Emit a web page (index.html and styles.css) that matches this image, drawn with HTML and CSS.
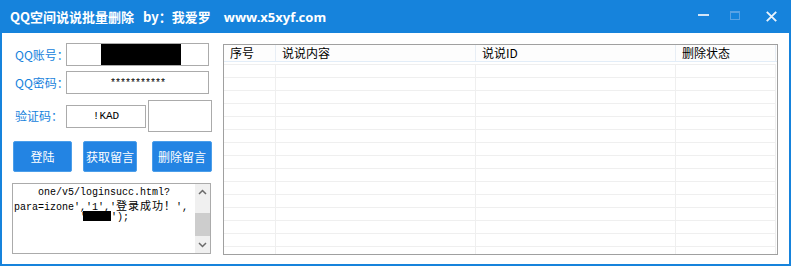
FILE: index.html
```html
<!DOCTYPE html>
<html>
<head>
<meta charset="utf-8">
<link rel="stylesheet" href="styles.css">
</head>
<body>
<div class="window">
  <div class="titlebar">
    <div class="title"><span class="t1">QQ空间说说批量删除</span><span class="t2">by：我爱罗</span><span class="t3">www.x5xyf.com</span></div>
    <div class="controls">
      <svg class="ctl-min" width="11" height="11" viewBox="0 0 11 11"><rect x="0" y="3" width="11" height="2" fill="#d2e5f7"/></svg>
      <svg class="ctl-max" width="10" height="11" viewBox="0 0 10 11"><rect x="0.5" y="0.5" width="9" height="8" fill="none" stroke="#5aa2e4"/><rect x="0" y="0" width="10" height="2" fill="#5aa2e4"/></svg>
      <svg class="ctl-close" width="11" height="11" viewBox="0 0 11 11"><path d="M0.8 0.8 L10.2 10.2 M10.2 0.8 L0.8 10.2" stroke="#eaf3fc" stroke-width="1.9" fill="none"/></svg>
    </div>
  </div>
  <div class="content">
    <div class="left">
      <div class="row r1"><span class="lbl">QQ账号：</span><div class="input wide"><span class="redact"></span></div></div>
      <div class="row r2"><span class="lbl">QQ密码：</span><div class="input wide pwd">***********</div></div>
      <div class="row r3"><span class="lbl">验证码：</span><div class="input code">!KAD</div><div class="captcha"></div></div>
      <div class="buttons">
        <div class="btn b1">登陆</div>
        <div class="btn b2">获取留言</div>
        <div class="btn b3">删除留言</div>
      </div>
      <div class="log">
        <div class="logtext"><div class="ln">    one/v5/loginsucc.html?</div><div class="ln">para=izone','1','<span class="cjk">登录成功！</span>',</div><div class="ln">           '<span class="blk"></span>');</div></div>
        <div class="scroll">
          <svg class="arr" width="15" height="17" viewBox="0 0 15 17"><polyline points="4,10 7.5,6.5 11,10" fill="none" stroke="#6a6a6a" stroke-width="1.5"/></svg>
          <div class="track"><div class="thumb"></div></div>
          <svg class="arr" width="15" height="17" viewBox="0 0 15 17"><polyline points="4,7 7.5,10.5 11,7" fill="none" stroke="#6a6a6a" stroke-width="1.5"/></svg>
        </div>
      </div>
    </div>
    <div class="right">
      <div class="list">
        <div class="head">
          <div class="hc">序号</div>
          <div class="hc">说说内容</div>
          <div class="hc">说说ID</div>
          <div class="hc">删除状态</div>
        </div>
        <div class="rows">
          <div class="r"><i></i><i></i><i></i><i></i></div>
          <div class="r"><i></i><i></i><i></i><i></i></div>
          <div class="r"><i></i><i></i><i></i><i></i></div>
          <div class="r"><i></i><i></i><i></i><i></i></div>
          <div class="r"><i></i><i></i><i></i><i></i></div>
          <div class="r"><i></i><i></i><i></i><i></i></div>
          <div class="r"><i></i><i></i><i></i><i></i></div>
          <div class="r"><i></i><i></i><i></i><i></i></div>
          <div class="r"><i></i><i></i><i></i><i></i></div>
          <div class="r"><i></i><i></i><i></i><i></i></div>
          <div class="r"><i></i><i></i><i></i><i></i></div>
          <div class="r"><i></i><i></i><i></i><i></i></div>
          <div class="r"><i></i><i></i><i></i><i></i></div>
          <div class="r"><i></i><i></i><i></i><i></i></div>
          <div class="r"><i></i><i></i><i></i><i></i></div>
        </div>
      </div>
    </div>
  </div>
</div>
</body>
</html>
```
FILE: styles.css
```css
* { box-sizing: border-box; }
html, body { margin: 0; padding: 0; background: #ffffff; }
body { font-family: "Noto Sans CJK SC", "Noto Sans", sans-serif; }

.window {
  width: 791px;
  height: 266px;
  background: #1683dc;
  display: flex;
  flex-direction: column;
  overflow: hidden;
}

.titlebar {
  height: 33px;
  flex: none;
  display: flex;
  align-items: center;
  color: #ffffff;
}
.title {
  padding-left: 10px;
  font-size: 13px;
  font-weight: bold;
  white-space: nowrap;
  line-height: 16px;
}
.t2 { margin-left: 9px; }
.t3 { margin-left: 13px; font-family: "Noto Sans", "Open Sans", sans-serif; }

.controls {
  margin-left: auto;
  align-self: flex-start;
  padding-top: 11px;
  padding-right: 14px;
  display: flex;
  align-items: flex-start;
}
.controls svg { display: block; }
.ctl-max { margin-left: 21px; }
.ctl-close { margin-left: 26px; }

.content {
  flex: 1;
  margin: 0 2px 2px 2px;
  background: #ffffff;
  display: flex;
}

.left {
  width: 221px;
  flex: none;
  padding-left: 10px;
  display: flex;
  flex-direction: column;
}

.row { display: flex; align-items: center; }
.r1 { margin-top: 10px; height: 23px; }
.r2 { margin-top: 5px; height: 23px; }
.r3 { margin-top: 6px; height: 32px; }

.lbl {
  width: 54px;
  padding-left: 3px;
  font-size: 12px;
  color: #1682dc;
  white-space: nowrap;
  line-height: 14px;
}

.input {
  height: 23px;
  border: 1px solid #ababab;
  background: #fff;
  display: flex;
  align-items: center;
  justify-content: center;
  font-size: 12px;
  color: #000;
}
.wide { width: 143px; }
.redact {
  display: block;
  width: 80px;
  height: 21px;
  background: #000;
  margin-left: 7px;
}
.pwd {
  font-family: "Liberation Mono", monospace;
  font-size: 10px;
  letter-spacing: -1px;
  padding-top: 2px;
}
.code {
  width: 80px;
  font-family: "Liberation Mono", monospace;
  font-size: 11px;
}
.captcha {
  width: 64px;
  height: 32px;
  margin-left: 2px;
  border: 1px solid #ababab;
  background: #fff;
}

.buttons {
  margin-top: 9px;
  height: 31px;
  display: flex;
}
.btn {
  height: 31px;
  background: #2384e3;
  border: 1px solid #4b9eea;
  border-radius: 2px;
  color: #ffffff;
  font-size: 12px;
  display: flex;
  align-items: center;
  justify-content: center;
}
.b1 { width: 59px; margin-left: 1px; }
.b2 { width: 54px; margin-left: 11px; }
.b3 { width: 60px; margin-left: 15px; }

.log {
  margin-top: 11px;
  width: 199px;
  height: 71px;
  border: 1px solid #ababab;
  display: flex;
  background: #fff;
}
.logtext {
  flex: 1;
  padding-top: 3px;
  padding-left: 1px;
  font-family: "Liberation Mono", monospace;
  font-size: 10px;
  color: #000;
  overflow: hidden;
}
.ln {
  height: 12px;
  line-height: 12px;
  white-space: pre;
}
.cjk {
  font-family: "Noto Sans CJK SC", sans-serif;
  font-size: 11px;
  letter-spacing: 1px;
  line-height: 12px;
}
.blk {
  display: inline-block;
  width: 28px;
  height: 10px;
  background: #000;
  margin-left: -3px;
  vertical-align: -1px;
}
.scroll {
  width: 15px;
  flex: none;
  background: #f0f0f0;
  display: flex;
  flex-direction: column;
}
.scroll .arr { display: block; flex: none; }
.track { flex: 1; padding-top: 12px; }
.thumb { height: 23px; background: #cdcdcd; }

.right { flex: 1; }
.list {
  margin-top: 11px;
  margin-left: 0;
  width: 555px;
  height: 211px;
  border: 1px solid #a0a0a0;
  background: #fff;
  overflow: hidden;
}
.head {
  display: grid;
  grid-template-columns: 52px 200px 200px 100px;
  height: 17px;
  border-bottom: 1px solid #e2edf8;
  background: #fdfdfd;
}
.hc {
  border-right: 1px solid #e8eef5;
  font-size: 12px;
  line-height: 16px;
  padding-left: 6px;
  color: #000;
  white-space: nowrap;
}
.rows { padding-top: 2px; }
.r {
  display: grid;
  grid-template-columns: 52px 200px 200px 100px;
  height: 13px;
}
.r i {
  display: block;
  border-top: 1px solid #efefef;
  border-right: 1px solid #efefef;
}
```
